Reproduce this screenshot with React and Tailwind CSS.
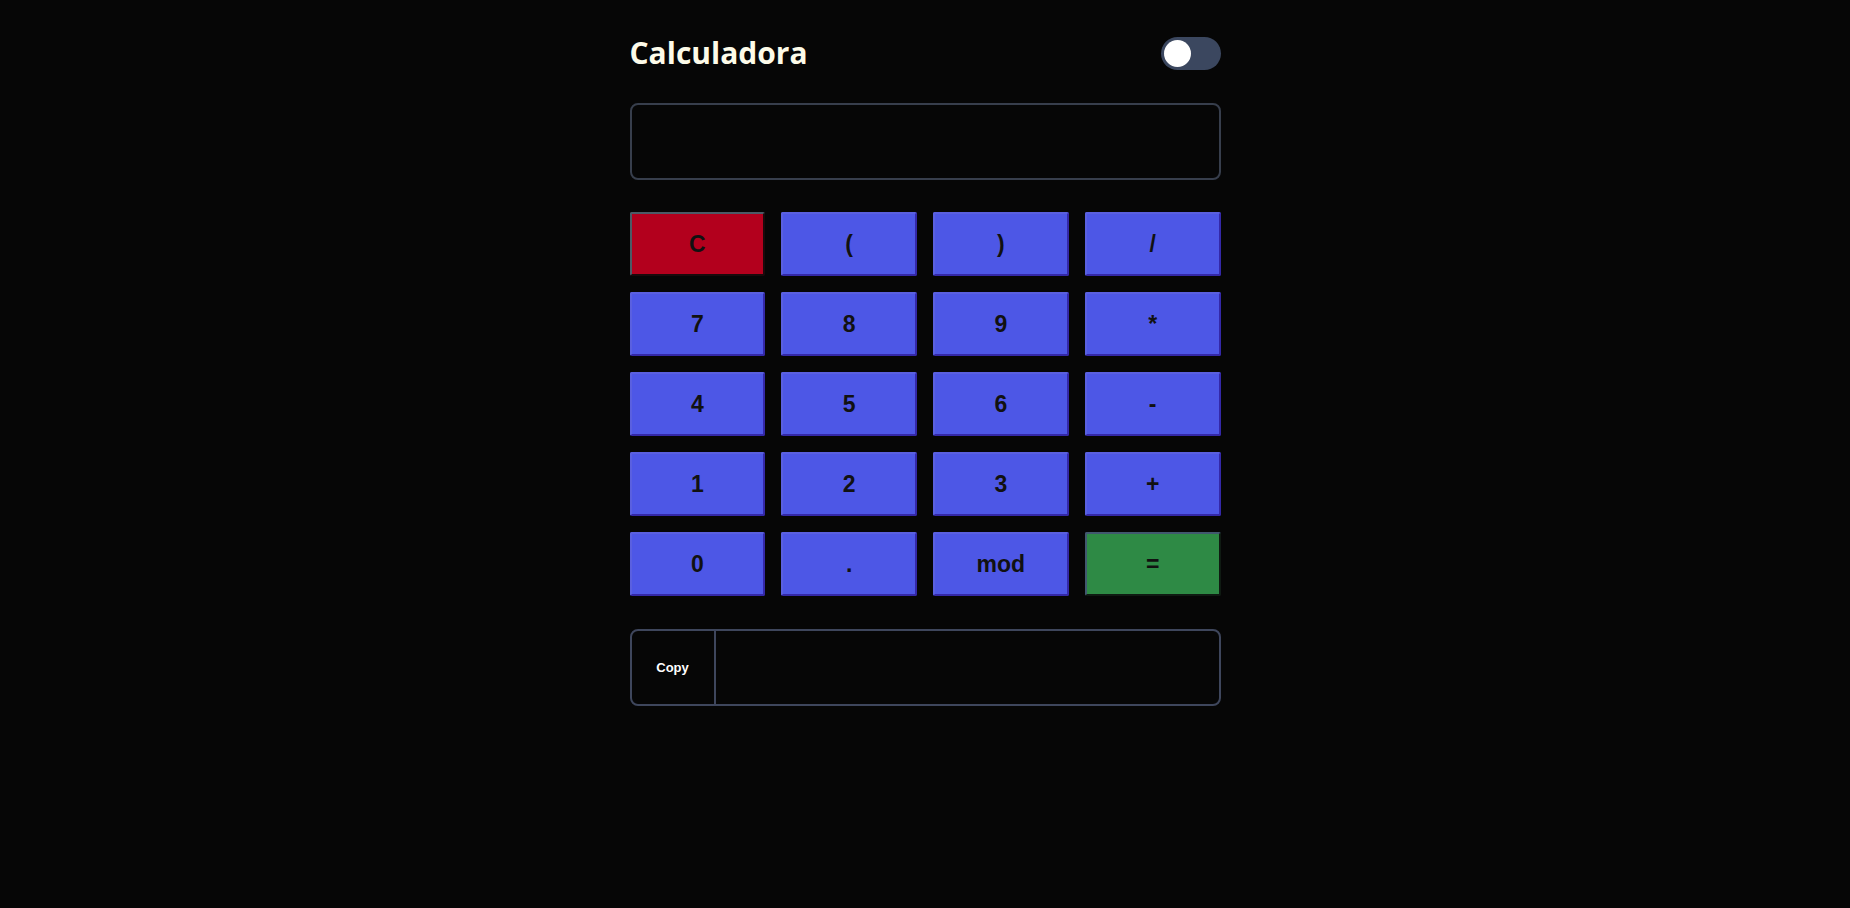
import { useState } from "react";

const keys = [
  ["C", "red"], ["(", "blue"], [")", "blue"], ["/", "blue"],
  ["7", "blue"], ["8", "blue"], ["9", "blue"], ["*", "blue"],
  ["4", "blue"], ["5", "blue"], ["6", "blue"], ["-", "blue"],
  ["1", "blue"], ["2", "blue"], ["3", "blue"], ["+", "blue"],
  ["0", "blue"], [".", "blue"], ["mod", "blue"], ["=", "green"],
];

const tone = {
  blue: "bg-[#4d57e6] border-t-[#5a60e0] border-l-[#5a60e0] border-b-[#3428a8] border-r-[#3428a8]",
  red: "bg-[#b3001d] border-t-[#4c5a66] border-l-[#4c5a66] border-b-[#1a0a0c] border-r-[#1a0a0c]",
  green: "bg-[#2e8a45] border-t-[#41586e] border-l-[#41586e] border-b-[#0f1a12] border-r-[#0f1a12]",
};

export default function App() {
  const [expr, setExpr] = useState("");
  const [result, setResult] = useState("");

  const press = (k) => {
    if (k === "C") { setExpr(""); setResult(""); return; }
    if (k === "=") {
      try {
        // eslint-disable-next-line no-new-func
        const r = Function(`return (${expr.replace(/mod/g, "%")})`)();
        setResult(String(r));
      } catch {
        setResult("Error");
      }
      return;
    }
    setExpr((e) => e + k);
  };

  return (
    <div className="min-h-screen bg-[#060606] font-['Liberation_Sans',Arial,sans-serif]">
      <div className="w-[591px] mx-auto pt-[33px]">
        {/* cabecera */}
        <div className="h-10 flex items-center justify-between">
          <h1 className="text-[30px] font-bold text-[#fdfbe9] leading-none font-['Open_Sans',sans-serif]">
            Calculadora
          </h1>
          <button className="w-[60px] h-[33px] rounded-full bg-[#3b475f] flex items-center px-[3px] mt-[1px]">
            <span className="w-[27px] h-[27px] rounded-full bg-white block" />
          </button>
        </div>

        {/* pantalla */}
        <div className="mt-[30px] h-[77px] rounded-lg border-2 border-[#373e4c] flex items-center justify-end px-4 text-3xl text-white">
          {expr}
        </div>

        {/* teclado */}
        <div className="mt-[32px] grid grid-cols-4 gap-4">
          {keys.map(([k, c]) => (
            <button
              key={k}
              onClick={() => press(k)}
              className={`h-16 rounded-[2px] border-2 text-[23px] font-bold text-[#111] ${tone[c]}`}
            >
              {k}
            </button>
          ))}
        </div>

        {/* resultado */}
        <div className="mt-[33px] h-[77px] rounded-lg border-2 border-[#3e465c] flex">
          <button
            onClick={() => navigator.clipboard?.writeText(result)}
            className="w-[84px] border-r-2 border-[#3e465c] text-[13px] font-bold text-white"
          >
            Copy
          </button>
          <div className="flex-1 flex items-center px-4 text-2xl text-white">{result}</div>
        </div>
      </div>
    </div>
  );
}
